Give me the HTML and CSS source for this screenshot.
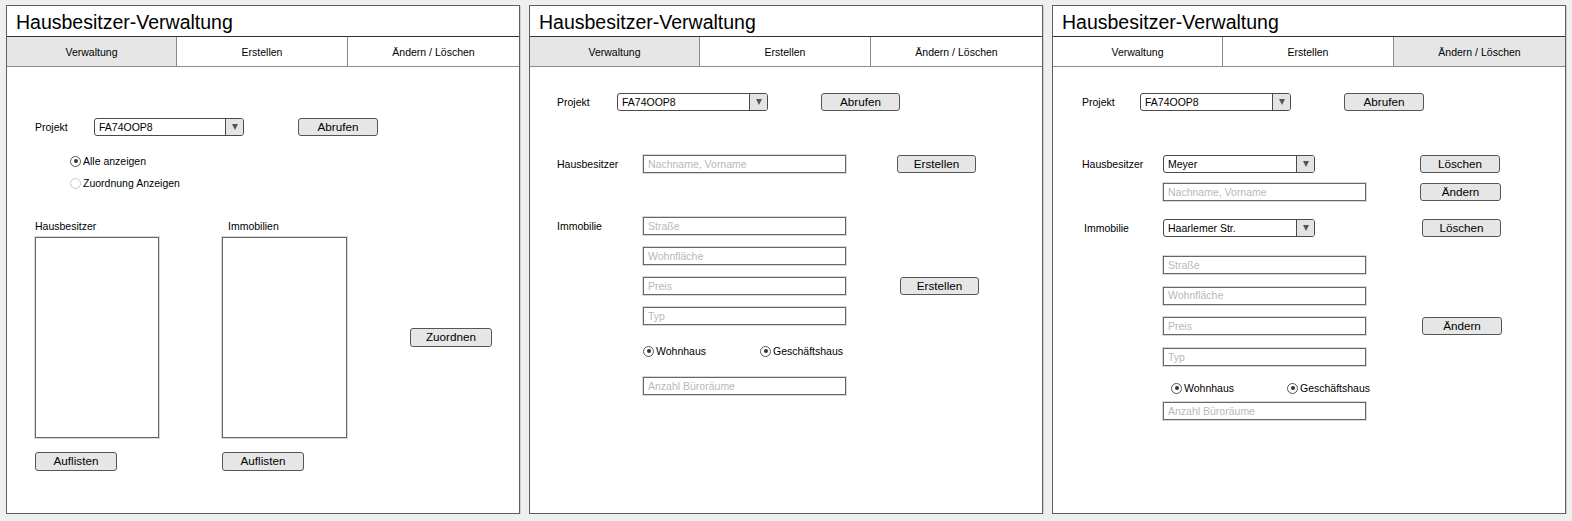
FILE: index.html
```html
<!DOCTYPE html>
<html lang="de">
<head>
<meta charset="utf-8">
<title>Hausbesitzer-Verwaltung</title>
<link rel="stylesheet" href="styles.css">
</head>
<body>
<div class="screens">

  <section class="panel">
    <div class="title">Hausbesitzer-Verwaltung</div>
    <div class="tabs"><div class="tab active">Verwaltung</div><div class="tab">Erstellen</div><div class="tab">Ändern / Löschen</div></div>
    <div class="body p1">
      <div class="row p1-proj">
        <span class="lbl p1-lbl">Projekt</span>
        <div class="combo w150"><span class="combo-val">FA74OOP8</span><span class="combo-arrow"></span></div>
        <span class="btn w80 p1-abrufen">Abrufen</span>
      </div>
      <div class="radio p1-r1"><span class="dot on"></span>Alle anzeigen</div>
      <div class="radio p1-r2"><span class="dot off"></span>Zuordnung Anzeigen</div>
      <div class="assign">
        <span class="lbl a-l1">Hausbesitzer</span>
        <span class="lbl a-l2">Immobilien</span>
        <div class="listbox a-list1"></div>
        <div class="listbox a-list2"></div>
        <span class="btn tall a-zuordnen">Zuordnen</span>
        <span class="btn tall a-auf1">Auflisten</span>
        <span class="btn tall a-auf2">Auflisten</span>
      </div>
    </div>
  </section>

  <section class="panel">
    <div class="title">Hausbesitzer-Verwaltung</div>
    <div class="tabs"><div class="tab active">Verwaltung</div><div class="tab">Erstellen</div><div class="tab">Ändern / Löschen</div></div>
    <div class="body p2">
      <div class="row p2-proj">
        <span class="lbl p2-lbl-proj">Projekt</span>
        <div class="combo w151"><span class="combo-val">FA74OOP8</span><span class="combo-arrow"></span></div>
        <span class="btn w79 p2-abrufen">Abrufen</span>
      </div>
      <div class="row p2-owner">
        <span class="lbl p2-lbl">Hausbesitzer</span>
        <div class="input w203">Nachname, Vorname</div>
        <span class="btn w79 p2-erstellen">Erstellen</span>
      </div>
      <div class="p2-immo">
        <span class="lbl i-lbl">Immobilie</span>
        <div class="input i-r1">Straße</div>
        <div class="input i-r2">Wohnfläche</div>
        <div class="input i-r3">Preis</div>
        <div class="input i-r4">Typ</div>
        <span class="btn i-btn">Erstellen</span>
      </div>
      <div class="radios p2-radios">
        <div class="radio p2-first"><span class="dot on"></span>Wohnhaus</div>
        <div class="radio"><span class="dot on"></span>Geschäftshaus</div>
      </div>
      <div class="input w203 p2-anz">Anzahl Büroräume</div>
    </div>
  </section>

  <section class="panel">
    <div class="title">Hausbesitzer-Verwaltung</div>
    <div class="tabs"><div class="tab">Verwaltung</div><div class="tab">Erstellen</div><div class="tab active">Ändern / Löschen</div></div>
    <div class="body p3">
      <div class="row p3-proj">
        <span class="lbl p3-lbl-proj">Projekt</span>
        <div class="combo w151"><span class="combo-val">FA74OOP8</span><span class="combo-arrow"></span></div>
        <span class="btn w80 p3-abrufen">Abrufen</span>
      </div>
      <div class="row p3-owner">
        <span class="lbl p3-lbl">Hausbesitzer</span>
        <div class="combo w152"><span class="combo-val">Meyer</span><span class="combo-arrow"></span></div>
        <span class="btn w80 p3-del1">Löschen</span>
      </div>
      <div class="row p3-name">
        <div class="input w203">Nachname, Vorname</div>
        <span class="btn w81 p3-chg1">Ändern</span>
      </div>
      <div class="row p3-immo">
        <span class="lbl p3-lbl p3-lbl-immo">Immobilie</span>
        <div class="combo w152"><span class="combo-val">Haarlemer Str.</span><span class="combo-arrow"></span></div>
        <span class="btn w79 p3-del2">Löschen</span>
      </div>
      <div class="p3-fields">
        <div class="input f-r1">Straße</div>
        <div class="input f-r2">Wohnfläche</div>
        <div class="input f-r3">Preis</div>
        <div class="input f-r4">Typ</div>
        <span class="btn f-btn">Ändern</span>
      </div>
      <div class="radios p3-radios">
        <div class="radio p3-first"><span class="dot on"></span>Wohnhaus</div>
        <div class="radio"><span class="dot on"></span>Geschäftshaus</div>
      </div>
      <div class="input w203 p3-anz">Anzahl Büroräume</div>
    </div>
  </section>

</div>
</body>
</html>
```

FILE: styles.css
```css
* { box-sizing: border-box; }

body {
  margin: 0;
  background: #efefef;
  font-family: "Liberation Sans", Arial, sans-serif;
  color: #000;
}

.screens {
  display: flex;
  gap: 9px;
  padding: 5px 6px 0;
}

.panel {
  width: 514px;
  height: 509px;
  flex-shrink: 0;
  border: 1px solid #5e5e5e;
  background: #fff;
  display: flex;
  flex-direction: column;
  box-shadow: 1px 1px 0 #cfcfcf;
}

.title {
  height: 31px;
  flex-shrink: 0;
  border-bottom: 1px solid #333;
  font-size: 19.5px;
  line-height: 33px;
  padding-left: 9px;
  white-space: nowrap;
}

.tabs {
  height: 30px;
  flex-shrink: 0;
  border-bottom: 1px solid #8a8a8a;
  display: grid;
  grid-template-columns: 170px 171px 1fr;
}

.tab {
  border-right: 1px solid #8a8a8a;
  display: flex;
  align-items: center;
  justify-content: center;
  font-size: 10.5px;
}
.tab:last-child { border-right: 0; }
.tab.active { background: #e6e6e6; }

.body {
  display: flex;
  flex-direction: column;
  align-items: flex-start;
}

.row {
  display: flex;
  align-items: center;
  height: 18px;
}

.lbl {
  font-size: 10.5px;
  flex-shrink: 0;
  white-space: nowrap;
}

.combo {
  display: flex;
  height: 18px;
  flex-shrink: 0;
  border: 1px solid #4a4a4a;
  border-radius: 3px;
  overflow: hidden;
  font-size: 10.5px;
  background: #fff;
}
.combo-val {
  flex: 1;
  padding-left: 4px;
  padding-bottom: 1px;
  display: flex;
  align-items: center;
  white-space: nowrap;
}
.combo-arrow {
  width: 18px;
  border-left: 1px solid #4a4a4a;
  background: #e4e4e4;
  display: flex;
  align-items: center;
  justify-content: center;
}
.combo-arrow::after {
  content: "";
  border-left: 3.5px solid transparent;
  border-right: 3.5px solid transparent;
  border-top: 6px solid #555;
}

.input {
  height: 18px;
  flex-shrink: 0;
  border: 1px solid #666;
  box-shadow: 0 0 0 1px #d8d8d8;
  font-size: 10.5px;
  color: #b8b8b8;
  padding-left: 4px;
  padding-bottom: 1px;
  display: flex;
  align-items: center;
  white-space: nowrap;
}

.btn {
  height: 18px;
  flex-shrink: 0;
  border: 1px solid #555;
  border-radius: 3px;
  background: #e6e6e6;
  font-size: 11.7px;
  display: flex;
  align-items: center;
  justify-content: center;
  padding-bottom: 2px;
  white-space: nowrap;
}
.btn.tall { height: 19px; }

.radios {
  display: flex;
  height: 14px;
}
.radio {
  display: flex;
  align-items: center;
  height: 14px;
  font-size: 10.5px;
  white-space: nowrap;
}
.dot {
  width: 11px;
  height: 11px;
  flex-shrink: 0;
  border: 1px solid #555;
  border-radius: 50%;
  margin-right: 2px;
  display: flex;
  align-items: center;
  justify-content: center;
}
.dot.on::after {
  content: "";
  width: 4px;
  height: 4px;
  border-radius: 50%;
  background: #333;
}
.dot.off { border-color: #c8c8c8; }

.listbox {
  border: 1px solid #666;
  box-shadow: 0 0 0 1px #d8d8d8;
}

/* widths */
.w79 { width: 79px; }
.w80 { width: 80px; }
.w81 { width: 81px; }
.w150 { width: 150px; }
.w151 { width: 151px; }
.w152 { width: 152px; }
.w203 { width: 203px; }

/* ---------- panel 1 ---------- */
.p1 { padding-left: 28px; }
.p1-proj { margin-top: 51px; }
.p1-lbl { width: 59px; }
.p1-abrufen { margin-left: 54px; }
.p1-r1 { margin-top: 18px; margin-left: 35px; }
.p1-r2 { margin-top: 8px; margin-left: 35px; }

.assign {
  margin-top: 30px;
  display: grid;
  grid-template-columns: 124px 125px 82px;
  grid-template-rows: 12px 5px 201px 14px 19px;
  column-gap: 63px;
}
.a-l1 { grid-column: 1; grid-row: 1; line-height: 12px; }
.a-l2 { grid-column: 2; grid-row: 1; line-height: 12px; margin-left: 6px; }
.a-list1 { grid-column: 1; grid-row: 3; }
.a-list2 { grid-column: 2; grid-row: 3; }
.a-zuordnen { grid-column: 3; grid-row: 3; align-self: center; }
.a-auf1 { grid-column: 1; grid-row: 5; width: 82px; }
.a-auf2 { grid-column: 2; grid-row: 5; width: 82px; }

/* ---------- panel 2 ---------- */
.p2 { padding-left: 27px; }
.p2-proj { margin-top: 26px; }
.p2-lbl-proj { width: 60px; }
.p2-abrufen { margin-left: 53px; }
.p2-owner { margin-top: 44px; }
.p2-lbl { width: 86px; }
.p2-erstellen { margin-left: 51px; }

.p2-immo {
  margin-top: 44px;
  display: grid;
  grid-template-columns: 86px 203px 54px 79px;
  grid-template-rows: repeat(4, 18px);
  row-gap: 12px;
}
.i-lbl { grid-column: 1; grid-row: 1; align-self: center; }
.i-r1 { grid-column: 2; grid-row: 1; }
.i-r2 { grid-column: 2; grid-row: 2; }
.i-r3 { grid-column: 2; grid-row: 3; }
.i-r4 { grid-column: 2; grid-row: 4; }
.i-btn { grid-column: 4; grid-row: 3; }

.p2-radios { margin-top: 19px; margin-left: 86px; }
.p2-first { width: 117px; }
.p2-anz { margin-top: 19px; margin-left: 86px; }

/* ---------- panel 3 ---------- */
.p3 { padding-left: 29px; }
.p3-proj { margin-top: 26px; }
.p3-lbl-proj { width: 58px; }
.p3-abrufen { margin-left: 53px; }
.p3-owner { margin-top: 44px; }
.p3-lbl { width: 81px; }
.p3-lbl-immo { padding-left: 2px; }
.p3-del1 { margin-left: 105px; }
.p3-name { margin-top: 10px; margin-left: 81px; }
.p3-chg1 { margin-left: 54px; }
.p3-immo { margin-top: 18px; }
.p3-del2 { margin-left: 107px; }

.p3-fields {
  margin-top: 19px;
  margin-left: 81px;
  display: grid;
  grid-template-columns: 203px 80px;
  grid-template-rows: repeat(4, 18px);
  column-gap: 56px;
  row-gap: 12.7px;
}
.f-r1 { grid-column: 1; grid-row: 1; }
.f-r2 { grid-column: 1; grid-row: 2; }
.f-r3 { grid-column: 1; grid-row: 3; }
.f-r4 { grid-column: 1; grid-row: 4; }
.f-btn { grid-column: 2; grid-row: 3; }

.p3-radios { margin-top: 15px; margin-left: 89px; }
.p3-first { width: 116px; }
.p3-anz { margin-top: 7px; margin-left: 81px; }
```
